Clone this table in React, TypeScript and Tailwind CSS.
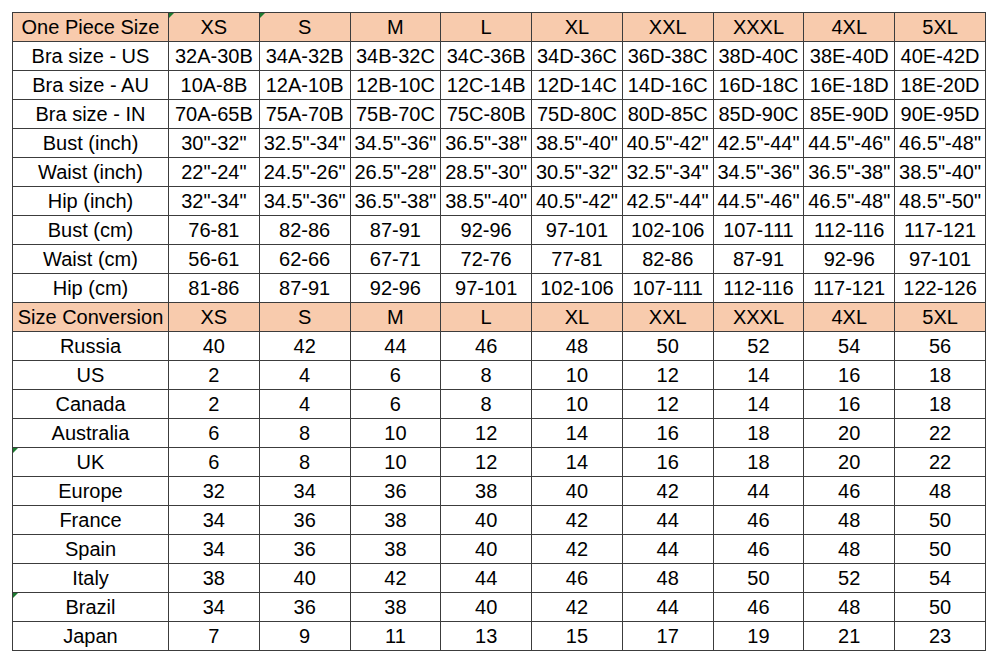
const sizes = ["XS", "S", "M", "L", "XL", "XXL", "XXXL", "4XL", "5XL"];

const measureRows: [string, string[]][] = [
  ["Bra size - US", ["32A-30B", "34A-32B", "34B-32C", "34C-36B", "34D-36C", "36D-38C", "38D-40C", "38E-40D", "40E-42D"]],
  ["Bra size - AU", ["10A-8B", "12A-10B", "12B-10C", "12C-14B", "12D-14C", "14D-16C", "16D-18C", "16E-18D", "18E-20D"]],
  ["Bra size - IN", ["70A-65B", "75A-70B", "75B-70C", "75C-80B", "75D-80C", "80D-85C", "85D-90C", "85E-90D", "90E-95D"]],
  ["Bust (inch)", ['30"-32"', '32.5"-34"', '34.5"-36"', '36.5"-38"', '38.5"-40"', '40.5"-42"', '42.5"-44"', '44.5"-46"', '46.5"-48"']],
  ["Waist (inch)", ['22"-24"', '24.5"-26"', '26.5"-28"', '28.5"-30"', '30.5"-32"', '32.5"-34"', '34.5"-36"', '36.5"-38"', '38.5"-40"']],
  ["Hip (inch)", ['32"-34"', '34.5"-36"', '36.5"-38"', '38.5"-40"', '40.5"-42"', '42.5"-44"', '44.5"-46"', '46.5"-48"', '48.5"-50"']],
  ["Bust (cm)", ["76-81", "82-86", "87-91", "92-96", "97-101", "102-106", "107-111", "112-116", "117-121"]],
  ["Waist (cm)", ["56-61", "62-66", "67-71", "72-76", "77-81", "82-86", "87-91", "92-96", "97-101"]],
  ["Hip (cm)", ["81-86", "87-91", "92-96", "97-101", "102-106", "107-111", "112-116", "117-121", "122-126"]],
];

const countryRows: [string, string[]][] = [
  ["Russia", ["40", "42", "44", "46", "48", "50", "52", "54", "56"]],
  ["US", ["2", "4", "6", "8", "10", "12", "14", "16", "18"]],
  ["Canada", ["2", "4", "6", "8", "10", "12", "14", "16", "18"]],
  ["Australia", ["6", "8", "10", "12", "14", "16", "18", "20", "22"]],
  ["UK", ["6", "8", "10", "12", "14", "16", "18", "20", "22"]],
  ["Europe", ["32", "34", "36", "38", "40", "42", "44", "46", "48"]],
  ["France", ["34", "36", "38", "40", "42", "44", "46", "48", "50"]],
  ["Spain", ["34", "36", "38", "40", "42", "44", "46", "48", "50"]],
  ["Italy", ["38", "40", "42", "44", "46", "48", "50", "52", "54"]],
  ["Brazil", ["34", "36", "38", "40", "42", "44", "46", "48", "50"]],
  ["Japan", ["7", "9", "11", "13", "15", "17", "19", "21", "23"]],
];

// little green "error" corner that Excel draws
function Flag() {
  return (
    <span className="absolute left-0 top-0 h-0 w-0 border-r-[5px] border-t-[5px] border-r-transparent border-t-[#1c7a30]" />
  );
}

const cell = "relative h-[29px] border border-[#3c3c3c] p-0 text-center align-middle leading-none whitespace-nowrap";

function HeaderRow({ label, flagged }: { label: string; flagged?: boolean }) {
  return (
    <tr className="bg-[#f8cbad]">
      <td className={cell}>{label}</td>
      {sizes.map((s, i) => (
        <td key={s} className={cell}>
          {flagged && i < 2 && <Flag />}
          {s}
        </td>
      ))}
    </tr>
  );
}

function DataRow({ label, values, flagged }: { label: string; values: string[]; flagged?: boolean }) {
  return (
    <tr>
      <td className={cell}>
        {flagged && <Flag />}
        {label}
      </td>
      {values.map((v, i) => (
        <td key={i} className={cell}>
          {v}
        </td>
      ))}
    </tr>
  );
}

export default function App() {
  return (
    <div className="h-[665px] w-[1000px] bg-white pl-[12px] pt-[12px] font-['Liberation_Sans',Arial,sans-serif] text-[20px] text-black">
      <table className="w-[974px] table-fixed border-collapse">
        <colgroup>
          <col className="w-[156px]" />
          {sizes.map((s) => (
            <col key={s} />
          ))}
        </colgroup>
        <tbody>
          <HeaderRow label="One Piece Size" flagged />
          {measureRows.map(([label, values]) => (
            <DataRow key={label} label={label} values={values} />
          ))}
          <HeaderRow label="Size Conversion" />
          {countryRows.map(([label, values]) => (
            <DataRow key={label} label={label} values={values} flagged={label === "UK" || label === "Brazil"} />
          ))}
        </tbody>
      </table>
    </div>
  );
}
